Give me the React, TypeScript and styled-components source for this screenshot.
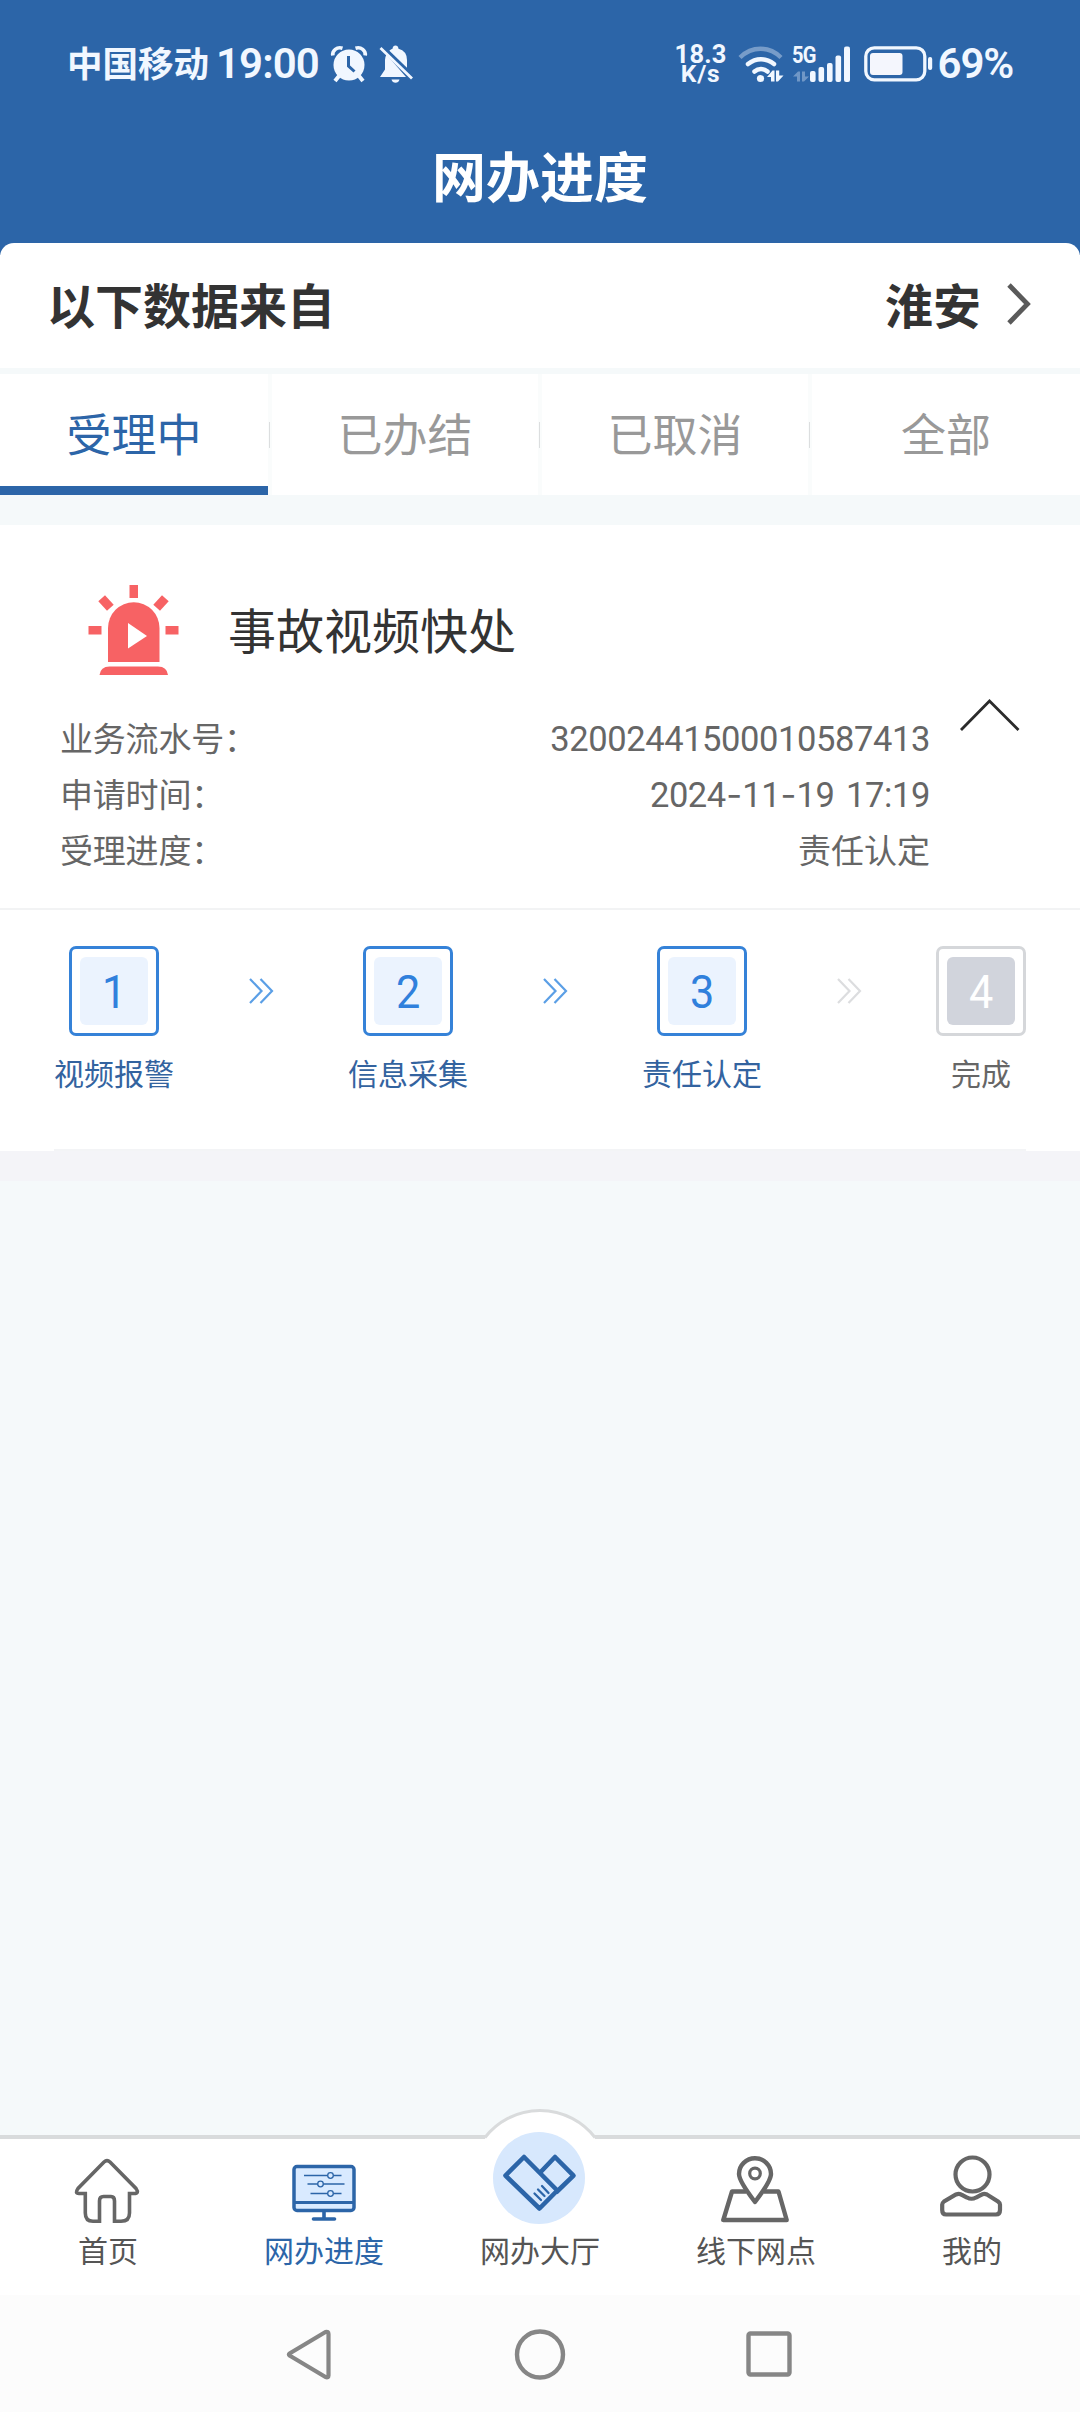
import React from "react";
import styled, { createGlobalStyle } from "styled-components";

const Global = createGlobalStyle`
  * { box-sizing: border-box; }
  body {
    margin: 0;
    background: #f5f9fa;
    font-family: "Noto Sans CJK SC", sans-serif;
  }
  svg { display: block; flex: none; overflow: visible; }
`;

const BLUE = "#2c65a8";
const GREY = "#666";

const Screen = styled.div`
  width: 1080px;
  height: 2412px;
  display: flex;
  flex-direction: column;
  background: #f5f9fa;
  overflow: hidden;
`;

const Header = styled.header`
  background: ${BLUE};
  color: #fff;
  height: 255px;
  flex: none;
`;

const StatusBar = styled.div`
  height: 128px;
  padding: 0 67px 0 67px;
  display: flex;
  align-items: center;
  justify-content: space-between;
  color: #f1f7ff;
`;

const StatusGroup = styled.div`
  display: flex;
  align-items: center;
`;

const Carrier = styled.span`
  font-size: 35.5px;
  font-weight: 700;
  line-height: 40px;
  padding-bottom: 4px;
  white-space: nowrap;
`;

const Numeric = styled.span<{ $size: number; $weight?: number; $spacing?: number }>`
  font-family: Roboto, "Noto Sans CJK SC", sans-serif;
  font-size: ${(p) => p.$size}px;
  font-weight: ${(p) => p.$weight ?? 400};
  letter-spacing: ${(p) => p.$spacing ?? 0}px;
  line-height: 1;
  white-space: nowrap;
`;

const Time = styled(Numeric)`
  margin: 0 12px 0 7px;
`;

const Speed = styled.div`
  display: flex;
  flex-direction: column;
  align-items: center;
  width: 52px;
  margin-right: 12px;

  span { line-height: 20px; }
`;

const Percent = styled(Numeric)`
  margin-left: 6px;
`;

const PageTitle = styled.h1`
  margin: 0;
  text-align: center;
  font-size: 54px;
  font-weight: 700;
  line-height: 80px;
  padding-top: 7px;
`;

const SourceBar = styled.section`
  height: 125px;
  margin-top: -12px;
  padding: 0 49px 6px 47px;
  flex: none;
  background: #fff;
  border-radius: 14px 14px 0 0;
  display: flex;
  align-items: center;
  justify-content: space-between;
  font-size: 48px;
  font-weight: 700;
  color: #333;
`;

const City = styled.div`
  display: flex;
  align-items: center;
  gap: 26px;
`;

const Tabs = styled.nav`
  display: grid;
  grid-template-columns: 268px 270px 270px 1fr;
  height: 121px;
  margin-top: 6px;
  flex: none;
  background: #fff;
`;

const Tab = styled.div<{ $active?: boolean }>`
  position: relative;
  display: flex;
  align-items: center;
  justify-content: center;
  font-size: 45px;
  line-height: 60px;
  color: ${(p) => (p.$active ? BLUE : "#999")};
  border-bottom: ${(p) => (p.$active ? `9px solid ${BLUE}` : "0")};
  border-left: ${(p) => (p.$active ? "0" : "4px solid #fafcfc")};
  padding-top: 5px;
  padding-bottom: ${(p) => (p.$active ? 0 : 9)}px;

  &::before {
    content: "";
    display: ${(p) => (p.$active ? "none" : "block")};
    position: absolute;
    left: -3px;
    top: 48px;
    width: 1px;
    height: 26px;
    background: #dcdedf;
  }
`;

const Card = styled.article`
  margin-top: 30px;
  height: 626px;
  flex: none;
  background: #fff;
  display: flex;
  flex-direction: column;
`;

const CardTitle = styled.div`
  display: flex;
  align-items: center;
  gap: 49px;
  padding: 60px 0 0 88px;
  height: 150px;
  font-size: 48px;
  line-height: 87px;
  color: #333;

  span { padding-bottom: 3px; }
`;

const Details = styled.div`
  display: flex;
  align-items: flex-start;
  margin-top: 35px;
  padding-left: 60px;
  height: 198px;
`;

const Rows = styled.dl`
  margin: -1px 0 0;
  width: 870px;
`;

const Row = styled.div`
  display: flex;
  justify-content: space-between;
  align-items: center;
  height: 56px;
  font-size: 33px;
  color: ${GREY};

  dt, dd { margin: 0; line-height: 56px; white-space: nowrap; }
  dt { letter-spacing: -0.2px; }
`;

const DateTime = styled(Numeric)`
  word-spacing: 3.5px;
`;

const Dash = styled.span`
  display: inline-block;
  width: 16.3px;
  text-align: center;
  font-family: Inter, sans-serif;
`;

const Toggle = styled.div`
  margin: -11px 0 0 30px;
`;

const Steps = styled.div`
  border-top: 2px solid #f2f3f4;
  padding: 36px 54px 0;
  display: flex;
  justify-content: space-between;
`;

const Step = styled.div`
  display: flex;
  flex-direction: column;
  align-items: center;
`;

const StepBox = styled.div<{ $done: boolean }>`
  width: 90px;
  height: 90px;
  padding: 8px;
  border: 3px solid ${(p) => (p.$done ? "#3582d8" : "#d5d7da")};
  border-radius: 7px;
`;

const StepNumber = styled.div<{ $done: boolean }>`
  height: 68px;
  border-radius: 6px;
  display: flex;
  align-items: center;
  justify-content: center;
  background: ${(p) => (p.$done ? "#ebf3fe" : "#d1d4dc")};
  color: ${(p) => (p.$done ? "#3080dc" : "#fff")};

  span { transform: scaleX(0.92); }
`;

const StepLabel = styled.div<{ $done: boolean }>`
  margin-top: 14px;
  font-size: 30px;
  line-height: 44px;
  color: ${(p) => (p.$done ? "#33639f" : GREY)};
`;

const Arrow = styled.div`
  height: 90px;
  display: flex;
  align-items: center;
`;

const CardEdge = styled.div`
  height: 2px;
  margin: auto 54px 0;
  background: #f3f4f6;
`;

const Band = styled.div`
  height: 30px;
  flex: none;
  background: #f4f4f8;
`;

const BottomBar = styled.footer`
  position: relative;
  margin-top: auto;
  height: 160px;
  flex: none;
  background: #fff;
  border-top: 4px solid #d9dbdc;
  display: grid;
  grid-template-columns: repeat(5, 1fr);
`;

const Bump = styled.svg`
  position: absolute;
  left: 480px;
  top: -31px;
`;

const BarItem = styled.div<{ $active?: boolean }>`
  position: relative;
  display: flex;
  flex-direction: column;
  align-items: center;
  font-size: 30px;
  line-height: 44px;
  color: ${(p) => (p.$active ? BLUE : "#555")};
`;

const BarIcon = styled.div<{ $top: number; $shift?: number }>`
  height: 88px;
  padding-top: ${(p) => p.$top}px;
  padding-right: ${(p) => p.$shift ?? 0}px;
`;

const SystemNav = styled.div`
  height: 117px;
  flex: none;
  background: #fcfcfc;
  display: flex;
  justify-content: center;
  align-items: flex-start;
  padding: 33px 0 0 0;
  gap: 181px;
`;

const AlarmIcon = () => (
  <svg width="36" height="36" viewBox="0 0 36 36">
    <circle cx="18" cy="19" r="15.5" fill="#f1f7ff" />
    <path d="M1.800 9.500C1 4.500 6 .5 11.500 2.200M34.200 9.500C35 4.500 30 .5 24.500 2.200" stroke="#f1f7ff" strokeWidth="3.600" fill="none" />
    <path d="M8 30L4 35M28 30l4 5" stroke="#f1f7ff" strokeWidth="4" />
    <path d="M17.500 10v10l6 5.500" stroke={BLUE} strokeWidth="3" fill="none" />
  </svg>
);

const BellSvg = styled.svg`
  margin-left: 12px;
`;

const BellOffIcon = () => (
  <BellSvg width="35" height="38" viewBox="0 0 35 38">
    <path d="M5 32H1l5-7.500V15Q6 12 7.500 9.500L27 32z" fill="#f1f7ff" />
    <path d="M10 6Q12 4 13.500 3.700Q14 .5 16.500 .5T19.500 3.700Q28 6 28 15V24z" fill="#f1f7ff" />
    <path d="M1.500 3L33 33.500" stroke="#f1f7ff" strokeWidth="2.800" />
    <path d="M12.500 34.500h8q-1 3.200-4 3.200t-4-3.200z" fill="#f1f7ff" />
    <path d="M4 1L35.500 31.500" stroke={BLUE} strokeWidth="2" />
  </BellSvg>
);

const WifiIcon = () => (
  <svg width="44" height="36" viewBox="0 0 44 36">
    <g fill="none" stroke="#f1f7ff" strokeWidth="4.500">
      <path d="M1 11.500Q10 2.800 21.500 2.800T42 11.500" opacity=".38" />
      <path d="M9 18Q15 13.300 22 13.300T35 18" strokeLinecap="round" />
      <path d="M15.500 25.500Q18.500 23 22 23T28.500 25.500" strokeLinecap="round" />
    </g>
    <circle cx="21.500" cy="32.500" r="3.600" fill="#f1f7ff" />
    <path d="M28 31L33.500 24.500h2V35.500h-3.500V31zM37 24.500h3.200v5H44.500L39 35.500h-2z" fill="#f1f7ff" />
  </svg>
);

const SignalWrap = styled.div`
  position: relative;
  margin: 0 14px 0 10px;

  span {
    position: absolute;
    left: -1px;
    top: -3px;
    transform: scaleX(0.82);
    transform-origin: left;
  }
`;

const SignalIcon = () => (
  <SignalWrap>
    <svg width="57" height="36" viewBox="0 0 57 36">
      <g fill="#f1f7ff">
        <rect x="17" y="25" width="5.600" height="11" rx="2" />
        <rect x="25.500" y="21" width="5.600" height="15" rx="2" />
        <rect x="34" y="17" width="5.600" height="19" rx="2" />
        <rect x="42.500" y="9.500" width="5.600" height="26.500" rx="2" />
        <rect x="51" y="0.500" width="6" height="35.500" rx="2" />
        <path d="M0 30.500L5 25.500h2V35.500H4V30.500zM9 25.500h3v5H16L11 35.500H9z" opacity=".35" />
      </g>
    </svg>
    <Numeric $size={24.500} $weight={700} $spacing={-1}>5G</Numeric>
  </SignalWrap>
);

const BatteryIcon = () => (
  <svg width="68" height="36" viewBox="0 0 68 36">
    <rect x="1.800" y="1.800" width="59" height="32" rx="8.500" fill="none" stroke="#f1f7ff" strokeWidth="3.300" />
    <rect x="6" y="7" width="32.500" height="22" rx="3" fill="#f4f6fd" />
    <rect x="64" y="11" width="4.200" height="13" rx="2" fill="#f1f7ff" />
  </svg>
);

const SirenIcon = () => (
  <svg width="91" height="90" viewBox="0 0 91 90" fill="#f76264">
    <path d="M20 77V43a25.700 25.700 0 0 1 51.500 0V77z" />
    <path d="M11.500 90q1-8.500 10-8.500H70q9 0 10 8.500z" />
    <rect x="41.500" y="0" width="8.500" height="13" />
    <rect x="0.500" y="41" width="13" height="8.500" />
    <rect x="77.500" y="41" width="13" height="8.500" />
    <rect x="-6.500" y="-4.500" width="13" height="9" transform="translate(18 18) rotate(48)" />
    <rect x="-6.500" y="-4.500" width="13" height="9" transform="translate(73 18) rotate(-48)" />
    <path d="M40 38L59 51L40 63.500z" fill="#fff" />
  </svg>
);

const DoubleChevron = ({ color }: { color: string }) => (
  <svg width="24" height="26" viewBox="0 0 24 26" fill="none" stroke={color} strokeWidth="2.200">
    <path d="M1 1L12.500 13L1 25M11.500 1L23 13L11.500 25" />
  </svg>
);

const HomeIcon = () => (
  <svg width="64" height="64" viewBox="0 0 64 64" fill="none" stroke="#666" strokeWidth="3.600">
    <path d="M29 3Q32 .3 35 3L61 29.500Q64.500 34.500 59 34.500H54.500V54Q54.500 62.300 46 62.300H39.500V42Q39.500 37.500 36 37.500H28.500Q24.500 37.500 24.500 42V62.300H18Q10.300 62.300 10.300 54V34.500H4Q-.5 34.500 3 29.500z" />
  </svg>
);

const MonitorIcon = () => (
  <svg width="64" height="64" viewBox="0 0 64 64" fill="none" stroke={BLUE}>
    <rect x="2" y="7.500" width="60" height="44" rx="3" strokeWidth="3.500" fill="#d9eaff" />
    <path d="M2 43.500H62" strokeWidth="3.200" />
    <path d="M32 52v8" strokeWidth="3.600" />
    <path d="M21.500 60h21" strokeWidth="3.600" strokeLinecap="round" />
    <path d="M12 16.500H49.500M15.500 25H52.500M18.500 34.500H49.500" strokeWidth="1.300" />
    <g strokeWidth="1.300" fill="#d9eaff">
      <circle cx="38.500" cy="16.500" r="2.800" />
      <circle cx="28.500" cy="25" r="2.800" />
      <circle cx="38.500" cy="34.500" r="2.800" />
    </g>
  </svg>
);

const HandshakeSvg = styled.svg`
  margin-top: -22px;
`;

const HandshakeIcon = () => (
  <HandshakeSvg width="92" height="92" viewBox="0 0 92 92" fill="none" stroke={BLUE}>
    <circle cx="46" cy="46" r="46" fill="#d7e8fd" stroke="none" />
    <path d="M31 25L64.300 58.500L46.500 76.500L12.500 43.600z" strokeWidth="4.600" strokeLinejoin="round" />
    <path d="M47.700 40L62 25L80.500 43.600L63 60.500" strokeWidth="4.600" strokeLinejoin="round" />
    <path d="M41.500 61.500L48 68M45 57.500L51.500 64M49 54L55.500 61" strokeWidth="2.300" strokeLinecap="round" />
  </HandshakeSvg>
);

const PinIcon = () => (
  <svg width="68" height="66" viewBox="0 0 68 66" fill="none" stroke="#666" strokeWidth="4.400">
    <path d="M25 35.500H11L2.300 64H65.700L57.500 35.500H43" strokeLinejoin="round" />
    <path d="M34 46Q18 25 18 18a16 15.800 0 0 1 32 0Q50 25 34 46z" strokeLinejoin="round" />
    <circle cx="34" cy="17.500" r="5.300" strokeWidth="3.200" />
  </svg>
);

const PersonIcon = () => (
  <svg width="62" height="64" viewBox="0 0 62 64" fill="none" stroke="#666" strokeWidth="4.200">
    <circle cx="32.500" cy="19.500" r="17" />
    <path d="M2.200 49.500Q2.200 48 4 46.500L16 39.500Q19.500 38 22 40L27 42.500Q31.500 45 36 42.500L41 40Q43.500 38 47 39.500L58 46.500Q60 48 60 49.500V55Q60 59.500 56 59.500H6Q2.200 59.500 2.200 55z" />
  </svg>
);

const steps = [
  { n: 1, label: "视频报警", done: true },
  { n: 2, label: "信息采集", done: true },
  { n: 3, label: "责任认定", done: true },
  { n: 4, label: "完成", done: false },
];

export default function App() {
  return (
    <Screen>
      <Global />
      <Header>
        <StatusBar>
          <StatusGroup>
            <Carrier>中国移动</Carrier>
            <Time $size={42} $weight={600} $spacing={-0.9}>19:00</Time>
            <AlarmIcon />
            <BellOffIcon />
          </StatusGroup>
          <StatusGroup>
            <Speed>
              <Numeric $size={25.500} $weight={700} $spacing={0.2}>18.3</Numeric>
              <Numeric $size={24.500} $weight={700} $spacing={0.8}>K/s</Numeric>
            </Speed>
            <WifiIcon />
            <SignalIcon />
            <BatteryIcon />
            <Percent $size={42} $weight={600} $spacing={-1.2}>69%</Percent>
          </StatusGroup>
        </StatusBar>
        <PageTitle>网办进度</PageTitle>
      </Header>

      <SourceBar>
        <span>以下数据来自</span>
        <City>
          淮安
          <svg width="24" height="42" viewBox="0 0 24 42" fill="none" stroke="#5a5a5a" strokeWidth="4.800">
            <path d="M2 3L20.500 22L2 41" />
          </svg>
        </City>
      </SourceBar>

      <Tabs>
        <Tab $active>受理中</Tab>
        <Tab>已办结</Tab>
        <Tab>已取消</Tab>
        <Tab>全部</Tab>
      </Tabs>

      <Card>
        <CardTitle>
          <SirenIcon />
          <span>事故视频快处</span>
        </CardTitle>
        <Details>
          <Rows>
            <Row>
              <dt>业务流水号：</dt>
              <dd><Numeric $size={34.500} $spacing={-0.4}>32002441500010587413</Numeric></dd>
            </Row>
            <Row>
              <dt>申请时间：</dt>
              <dd>
                <DateTime $size={34.500} $spacing={-0.4}>
                  2024<Dash>-</Dash>11<Dash>-</Dash>19 17:19
                </DateTime>
              </dd>
            </Row>
            <Row>
              <dt>受理进度：</dt>
              <dd>责任认定</dd>
            </Row>
          </Rows>
          <Toggle>
            <svg width="60" height="32" viewBox="0 0 60 32" fill="none" stroke="#2b2b2b" strokeWidth="2.800">
              <path d="M1 31L29.500 2L58.500 31" />
            </svg>
          </Toggle>
        </Details>
        <Steps>
          {steps.map((s, i) => (
            <React.Fragment key={s.n}>
              {i > 0 && (
                <Arrow>
                  <DoubleChevron color={s.done ? "#5b9fe6" : "#dcdddf"} />
                </Arrow>
              )}
              <Step>
                <StepBox $done={s.done}>
                  <StepNumber $done={s.done}>
                    <Numeric $size={47}>{s.n}</Numeric>
                  </StepNumber>
                </StepBox>
                <StepLabel $done={s.done}>{s.label}</StepLabel>
              </Step>
            </React.Fragment>
          ))}
        </Steps>
        <CardEdge />
      </Card>
      <Band />

      <BottomBar>
        <Bump width="120" height="40" viewBox="0 0 120 40">
          <path d="M5.500 29A69.500 69.500 0 0 1 114.500 29L117 40H3z" fill="#fff" />
          <path d="M5 29.500A69.500 69.500 0 0 1 115 29.500" fill="none" stroke="#d9dbdc" strokeWidth="3" />
        </Bump>
        <BarItem><BarIcon $top={20} $shift={2}><HomeIcon /></BarIcon>首页</BarItem>
        <BarItem $active><BarIcon $top={20}><MonitorIcon /></BarIcon>网办进度</BarItem>
        <BarItem><BarIcon $top={15} $shift={2}><HandshakeIcon /></BarIcon>网办大厅</BarItem>
        <BarItem><BarIcon $top={17} $shift={2}><PinIcon /></BarIcon>线下网点</BarItem>
        <BarItem><BarIcon $top={16} $shift={2}><PersonIcon /></BarIcon>我的</BarItem>
      </BottomBar>

      <SystemNav>
        <svg width="46" height="52" viewBox="0 0 46 52" fill="none" stroke="#868686" strokeWidth="4.200" strokeLinejoin="round">
          <path d="M2.500 25.500Q1.500 26.500 2.500 27.500L38.500 49Q41.500 50 41.500 47.500V6Q41.500 3 38.500 4z" />
        </svg>
        <svg width="52" height="52" viewBox="0 0 52 52" fill="none" stroke="#868686" strokeWidth="4.400">
          <circle cx="26" cy="26.500" r="23" />
        </svg>
        <svg width="46" height="52" viewBox="0 0 46 52" fill="none" stroke="#868686" strokeWidth="4.400">
          <rect x="1.500" y="5.500" width="41" height="41" rx="2" />
        </svg>
      </SystemNav>
    </Screen>
  );
}
